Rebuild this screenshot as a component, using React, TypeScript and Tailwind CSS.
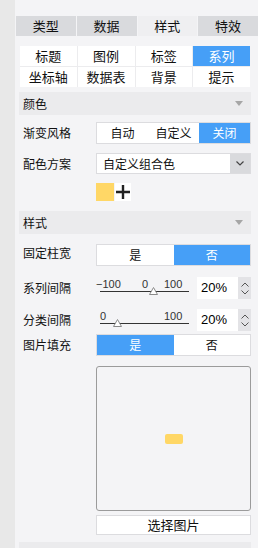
import React from 'react';

const blue = 'bg-[#469ff7] text-white';

const Header = ({ title }: { title: string }) => (
  <div className="flex h-[23px] items-center justify-between bg-[#ebebed] pl-[4px] pr-[8px]">
    <span>{title}</span>
    <svg width="8" height="5" viewBox="0 0 8 5">
      <path d="M0 0H8L4 5Z" fill="#a6a6a6" />
    </svg>
  </div>
);

const Segmented = ({ options, active }: { options: string[]; active: number }) => (
  <div className="flex h-[22px] flex-1 border border-[#dcdcdf] bg-white">
    {options.map((o, i) => (
      <div key={o} className={`flex flex-1 items-center justify-center ${i === active ? blue : ''}`}>
        {o}
      </div>
    ))}
  </div>
);

const Spinner = () => (
  <div className="flex w-[13px] flex-col items-center justify-center gap-[3px] bg-[#e3e3e6]">
    <svg width="8" height="5" viewBox="0 0 8 5">
      <path d="M0.5 4.5L4 1L7.5 4.5" stroke="#555" fill="none" />
    </svg>
    <svg width="8" height="5" viewBox="0 0 8 5">
      <path d="M0.5 0.5L4 4L7.5 0.5" stroke="#555" fill="none" />
    </svg>
  </div>
);

const Slider = ({ labels, thumb }: { labels: { text: string; x: number }[]; thumb: number }) => (
  <div className="relative h-[22px] w-[97px] font-['Liberation_Sans',sans-serif] text-[11px] leading-none text-[#333]">
    {labels.map((l) => (
      <span key={l.text + l.x} className="absolute top-[2px]" style={{ left: l.x }}>
        {l.text}
      </span>
    ))}
    <div className="absolute left-[4px] top-[14px] h-px w-[89px] bg-[#333]" />
    <svg className="absolute top-[10px]" style={{ left: thumb - 4 }} width="9" height="8" viewBox="0 0 9 8">
      <path d="M4.5 0.5L8.5 7.5H0.5Z" fill="white" stroke="#8a8a8a" />
    </svg>
  </div>
);

const Percent = () => (
  <div className="flex h-[22px] flex-1 pl-[4px]">
    <div className="flex flex-1 items-center bg-white pl-[4px] font-['Liberation_Sans',sans-serif] text-[13px] text-black">
      20%
    </div>
    <Spinner />
  </div>
);

const Row = ({ label, children, cls = 'items-center' }: { label: string; children: React.ReactNode; cls?: string }) => (
  <div className={`flex ${cls}`}>
    <div className="w-[77px] shrink-0 pl-[4px]">{label}</div>
    {children}
  </div>
);

export default function App() {
  const tabs = ['类型', '数据', '样式', '特效'];
  const sub = ['标题', '图例', '标签', '系列', '坐标轴', '数据表', '背景', '提示'];
  return (
    <div className="flex h-[548px] w-[258px] overflow-hidden font-['Noto_Sans_CJK_SC',sans-serif] text-[12px] text-[#111]">
      <div className="w-[15px] shrink-0 bg-[#e8e8e8]" />
      <div className="flex flex-1 flex-col bg-[#f4f4f6] pt-[16px]">
        <div className="flex h-[25px] gap-px pl-px">
          {tabs.map((t, i) => (
            <div
              key={t}
              className={`flex flex-1 items-center justify-center text-[13px] ${i === 2 ? 'bg-[#efeff1]' : 'bg-[#d9dadd]'}`}
            >
              {t}
            </div>
          ))}
        </div>

        <div className="flex flex-col pl-[4px] pr-[7px]">
          <div className="mx-px mt-[10px] grid grid-cols-4 gap-px bg-[#ececee]">
            {sub.map((s, i) => (
              <div key={s} className={`flex h-[20px] items-center justify-center text-[13px] ${i === 3 ? blue : 'bg-white'}`}>
                {s}
              </div>
            ))}
          </div>

          <div className="mt-[5px]">
            <Header title="颜色" />
          </div>

          <div className="mt-[7px]">
            <Row label="渐变风格">
              <Segmented options={['自动', '自定义', '关闭']} active={2} />
            </Row>
          </div>

          <div className="mt-[9px]">
            <Row label="配色方案">
              <div className="flex h-[21px] flex-1 border border-[#dcdcdf] bg-white">
                <div className="flex flex-1 items-center pl-[6px]">自定义组合色</div>
                <div className="flex w-[20px] items-center justify-center bg-[#d9dadd]">
                  <svg width="8" height="5" viewBox="0 0 8 5">
                    <path d="M0.5 0.5L4 4L7.5 0.5" stroke="#444" strokeWidth="1.2" fill="none" />
                  </svg>
                </div>
              </div>
            </Row>
          </div>

          <div className="mt-[9px] flex items-center pl-[77px]">
            <div className="h-[18px] w-[18px] bg-[#ffd766]" />
            <div className="ml-[1px] flex h-[18px] w-[16px] items-center justify-center bg-white">
              <svg width="14" height="14" viewBox="0 0 14 14">
                <path d="M7 0V14M0 7H14" stroke="#222" strokeWidth="2.4" />
              </svg>
            </div>
          </div>

          <div className="mt-[10px]">
            <Header title="样式" />
          </div>

          <div className="mt-[10px]">
            <Row label="固定柱宽" cls="items-start">
              <Segmented options={['是', '否']} active={1} />
            </Row>
          </div>

          <div className="mt-[11px]">
            <Row label="系列间隔">
              <Slider
                labels={[
                  { text: '−100', x: 0 },
                  { text: '0', x: 46 },
                  { text: '100', x: 68 },
                ]}
                thumb={57}
              />
              <Percent />
            </Row>
          </div>

          <div className="mt-[10px]">
            <Row label="分类间隔">
              <Slider
                labels={[
                  { text: '0', x: 4 },
                  { text: '100', x: 68 },
                ]}
                thumb={21}
              />
              <Percent />
            </Row>
          </div>

          <div className="mt-[3px]">
            <Row label="图片填充">
              <Segmented options={['是', '否']} active={0} />
            </Row>
          </div>

          <div className="ml-[77px] mt-[10px] flex h-[145px] items-center justify-center rounded-[3px] border border-[#9b9b9b]">
            <div className="h-[10px] w-[18px] rounded-[2px] bg-[#ffd766]" />
          </div>

          <div className="ml-[77px] mt-[4px] flex h-[20px] items-center justify-center border border-[#dcdcdf] bg-white text-[13px]">
            选择图片
          </div>

          <div className="mt-[7px] h-[6px] bg-[#ebebed]" />
        </div>
      </div>
    </div>
  );
}
